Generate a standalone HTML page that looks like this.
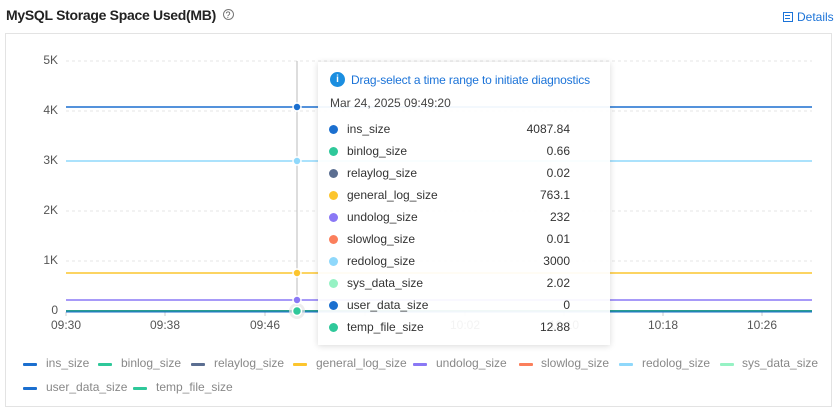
<!DOCTYPE html>
<html><head><meta charset="utf-8"><style>
*{margin:0;padding:0;box-sizing:border-box}
body{width:837px;height:408px;background:#fff;font-family:"Liberation Sans",sans-serif;position:relative;overflow:hidden;color:#333}
.a{position:absolute;white-space:nowrap}
.title{left:6px;top:7px;font-size:14px;font-weight:bold;color:#222;letter-spacing:-0.3px}
.panel{left:5px;top:33px;width:827px;height:374px;border:1px solid #e3e3e3}
.yl{font-size:12px;color:#555;text-align:right;width:30px;left:28px}
.xl{font-size:12px;color:#555;width:50px;text-align:center}
.tt{left:318px;top:62px;width:292px;height:283px;background:rgba(255,255,255,0.93);box-shadow:0 1px 6px rgba(0,0,0,0.15)}
.row{font-size:12px;color:#333;left:347px}
.val{font-size:12px;color:#333;right:267px;text-align:right}
.dot{width:9px;height:9px;border-radius:50%;left:329px}
.lg{font-size:12px;color:#888}
.lm{width:14px;height:3px;border-radius:1px}
</style></head><body>
<div class="a title">MySQL Storage Space Used(MB) <span style="font-weight:normal;border:1px solid #777;border-radius:50%;display:inline-block;width:11px;height:11px;line-height:10px;text-align:center;font-size:9px;vertical-align:2px;margin-left:3px;color:#555;letter-spacing:0">?</span></div>
<div class="a" style="left:783px;top:10px;font-size:12px;color:#1b73d8"><span style="display:inline-block;width:10px;height:10px;border:1.5px solid #1b73d8;margin-right:4px;vertical-align:-1px;background:linear-gradient(#1b73d8,#1b73d8) 1px 2px/5px 1px no-repeat,linear-gradient(#1b73d8,#1b73d8) 1px 4.5px/5px 1px no-repeat"></span>Details</div>
<div class="a panel"></div>
<svg class="a" style="left:0;top:0" width="837" height="408">
<g stroke="#e6e6e6" stroke-dasharray="3,3">
<line x1="66" y1="61" x2="812" y2="61"/><line x1="66" y1="111" x2="812" y2="111"/><line x1="66" y1="161" x2="812" y2="161"/><line x1="66" y1="211" x2="812" y2="211"/><line x1="66" y1="261" x2="812" y2="261"/></g>
<g stroke="#ccc"><line x1="66" y1="312" x2="66" y2="316"/><line x1="165" y1="312" x2="165" y2="316"/><line x1="265" y1="312" x2="265" y2="316"/><line x1="365" y1="312" x2="365" y2="316"/><line x1="465" y1="312" x2="465" y2="316"/><line x1="564" y1="312" x2="564" y2="316"/><line x1="663" y1="312" x2="663" y2="316"/><line x1="762" y1="312" x2="762" y2="316"/></g>
<line x1="297" y1="61" x2="297" y2="311" stroke="#bbb"/>
<line x1="66" y1="107" x2="812" y2="107" stroke="#1b6fcf" stroke-width="1.5"/>
<line x1="66" y1="161" x2="812" y2="161" stroke="#8fd8fb" stroke-width="1.5"/>
<line x1="66" y1="273" x2="812" y2="273" stroke="#fcc52e" stroke-width="1.5"/>
<line x1="66" y1="300" x2="812" y2="300" stroke="#8a78f5" stroke-width="1.5"/>
<line x1="66" y1="311" x2="812" y2="311" stroke="#2a9d8f" stroke-width="2"/>
<line x1="66" y1="312" x2="812" y2="312" stroke="#1b6fcf" stroke-width="1"/>
<circle cx="297" cy="311" r="8" fill="#e6e6e6" opacity=".7"/>
<g stroke="#fff" stroke-width="1.5">
<circle cx="297" cy="107" r="4" fill="#1b6fcf"/><circle cx="297" cy="161" r="4" fill="#8fd8fb"/><circle cx="297" cy="273" r="4" fill="#fcc52e"/><circle cx="297" cy="300" r="4" fill="#8a78f5"/><circle cx="297" cy="311" r="4.5" fill="#2fc89a"/></g>
</svg>
<div class="a yl" style="top:53px">5K</div><div class="a yl" style="top:103px">4K</div><div class="a yl" style="top:153px">3K</div><div class="a yl" style="top:203px">2K</div><div class="a yl" style="top:253px">1K</div><div class="a yl" style="top:303px">0</div>
<div class="a xl" style="left:41px;top:318px">09:30</div><div class="a xl" style="left:140px;top:318px">09:38</div><div class="a xl" style="left:240px;top:318px">09:46</div><div class="a xl" style="left:440px;top:318px">10:02</div><div class="a xl" style="left:539px;top:318px">10:10</div><div class="a xl" style="left:638px;top:318px">10:18</div><div class="a xl" style="left:737px;top:318px">10:26</div>
<div class="a tt"></div>
<div class="a" style="left:330px;top:72px;width:15px;height:15px;border-radius:50%;background:#1b8ee0;color:#fff;font-size:10px;font-weight:bold;text-align:center;line-height:15px">i</div>
<div class="a" style="left:351px;top:73px;font-size:12px;color:#1b73d8;letter-spacing:-0.15px">Drag-select a time range to initiate diagnostics</div>
<div class="a" style="left:330px;top:96px;font-size:12px;color:#444">Mar 24, 2025 09:49:20</div>
<div class="a dot" style="top:125px;background:#1b6fcf"></div><div class="a row" style="top:122px">ins_size</div><div class="a val" style="top:122px">4087.84</div>
<div class="a dot" style="top:147px;background:#2fc89a"></div><div class="a row" style="top:144px">binlog_size</div><div class="a val" style="top:144px">0.66</div>
<div class="a dot" style="top:169px;background:#5b6e91"></div><div class="a row" style="top:166px">relaylog_size</div><div class="a val" style="top:166px">0.02</div>
<div class="a dot" style="top:191px;background:#fcc52e"></div><div class="a row" style="top:188px">general_log_size</div><div class="a val" style="top:188px">763.1</div>
<div class="a dot" style="top:213px;background:#8a78f5"></div><div class="a row" style="top:210px">undolog_size</div><div class="a val" style="top:210px">232</div>
<div class="a dot" style="top:235px;background:#fb7f5c"></div><div class="a row" style="top:232px">slowlog_size</div><div class="a val" style="top:232px">0.01</div>
<div class="a dot" style="top:257px;background:#8fd8fb"></div><div class="a row" style="top:254px">redolog_size</div><div class="a val" style="top:254px">3000</div>
<div class="a dot" style="top:279px;background:#96f2c4"></div><div class="a row" style="top:276px">sys_data_size</div><div class="a val" style="top:276px">2.02</div>
<div class="a dot" style="top:301px;background:#1b6fcf"></div><div class="a row" style="top:298px">user_data_size</div><div class="a val" style="top:298px">0</div>
<div class="a dot" style="top:323px;background:#2fc89a"></div><div class="a row" style="top:320px">temp_file_size</div><div class="a val" style="top:320px">12.88</div>
<div class="a lm" style="left:23px;top:363px;background:#1b6fcf"></div><div class="a lg" style="left:46px;top:356px">ins_size</div>
<div class="a lm" style="left:98px;top:363px;background:#2fc89a"></div><div class="a lg" style="left:121px;top:356px">binlog_size</div>
<div class="a lm" style="left:191px;top:363px;background:#5b6e91"></div><div class="a lg" style="left:214px;top:356px">relaylog_size</div>
<div class="a lm" style="left:293px;top:363px;background:#fcc52e"></div><div class="a lg" style="left:316px;top:356px">general_log_size</div>
<div class="a lm" style="left:413px;top:363px;background:#8a78f5"></div><div class="a lg" style="left:436px;top:356px">undolog_size</div>
<div class="a lm" style="left:519px;top:363px;background:#fb7f5c"></div><div class="a lg" style="left:541px;top:356px">slowlog_size</div>
<div class="a lm" style="left:619px;top:363px;background:#8fd8fb"></div><div class="a lg" style="left:642px;top:356px">redolog_size</div>
<div class="a lm" style="left:720px;top:363px;background:#96f2c4"></div><div class="a lg" style="left:742px;top:356px">sys_data_size</div>
<div class="a lm" style="left:23px;top:387px;background:#1b6fcf"></div><div class="a lg" style="left:46px;top:380px">user_data_size</div>
<div class="a lm" style="left:133px;top:387px;background:#2fc89a"></div><div class="a lg" style="left:156px;top:380px">temp_file_size</div>
</body></html>
